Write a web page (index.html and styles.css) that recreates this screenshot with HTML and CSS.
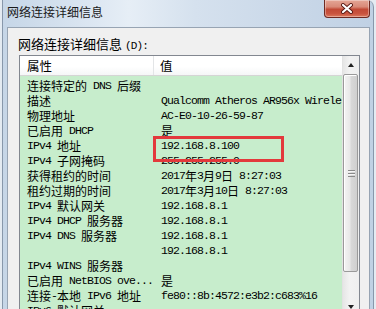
FILE: index.html
```html
<!DOCTYPE html>
<html lang="zh-CN">
<head>
<meta charset="utf-8">
<title>网络连接详细信息</title>
<link rel="stylesheet" href="styles.css">
</head>
<body>
<div class="win">
  <div class="titlebar">
    <span class="title">网络连接详细信息</span>
    <div class="close">
      <svg width="14" height="11" viewBox="0 0 14 11">
        <path d="M3 2 L11 9 M11 2 L3 9" stroke="#5a1a14" stroke-width="4" stroke-linecap="round"/>
        <path d="M3 2 L11 9 M11 2 L3 9" stroke="#ffffff" stroke-width="2.2" stroke-linecap="round"/>
      </svg>
    </div>
  </div>
  <div class="panel">
    <div class="label">网络连接详细信息 <span class="ak">(D):</span></div>
    <div class="list">
      <div class="main">
        <div class="head">
          <div class="h1">属性</div>
          <div class="h2">值</div>
        </div>
        <div class="body">
          <div class="row"><div class="n"><span class="c">连接特定的</span> DNS <span class="c">后缀</span></div><div class="v"></div></div>
          <div class="row"><div class="n"><span class="c">描述</span></div><div class="v">Qualcomm Atheros AR956x Wireless Network Adapter</div></div>
          <div class="row"><div class="n"><span class="c">物理地址</span></div><div class="v">AC-E0-10-26-59-87</div></div>
          <div class="row"><div class="n"><span class="c">已启用</span> DHCP</div><div class="v"><span class="c">是</span></div></div>
          <div class="row"><div class="n">IPv4 <span class="c">地址</span></div><div class="v hl">192.168.8.100</div></div>
          <div class="row"><div class="n">IPv4 <span class="c">子网掩码</span></div><div class="v">255.255.255.0</div></div>
          <div class="row"><div class="n"><span class="c">获得租约的时间</span></div><div class="v">2017<span class="c">年</span>3<span class="c">月</span>9<span class="c">日</span> 8:27:03</div></div>
          <div class="row"><div class="n"><span class="c">租约过期的时间</span></div><div class="v">2017<span class="c">年</span>3<span class="c">月</span>10<span class="c">日</span> 8:27:03</div></div>
          <div class="row"><div class="n">IPv4 <span class="c">默认网关</span></div><div class="v">192.168.8.1</div></div>
          <div class="row"><div class="n">IPv4 DHCP <span class="c">服务器</span></div><div class="v">192.168.8.1</div></div>
          <div class="row"><div class="n">IPv4 DNS <span class="c">服务器</span></div><div class="v">192.168.8.1</div></div>
          <div class="row"><div class="n"></div><div class="v">192.168.8.1</div></div>
          <div class="row"><div class="n">IPv4 WINS <span class="c">服务器</span></div><div class="v"></div></div>
          <div class="row"><div class="n"><span class="c">已启用</span> NetBIOS ove...</div><div class="v"><span class="c">是</span></div></div>
          <div class="row"><div class="n"><span class="c">连接</span>-<span class="c">本地</span> IPv6 <span class="c">地址</span></div><div class="v">fe80::8b:4572:e3b2:c683%16</div></div>
          <div class="row"><div class="n">IPv6 <span class="c">默认网关</span></div><div class="v"></div></div>
        </div>
      </div>
      <div class="sb">
        <div class="btn"><span class="arr up"></span></div>
        <div class="thumb"><span class="grip"></span></div>
        <div class="track"></div>
        <div class="btn"><span class="arr down"></span></div>
      </div>
    </div>
  </div>
</div>
</body>
</html>
```
FILE: styles.css
```css
* { box-sizing: border-box; }
html, body { margin: 0; padding: 0; }
body {
  width: 376px;
  height: 309px;
  overflow: hidden;
  background: #e4ebf2;
  font-family: "Noto Sans CJK SC", sans-serif;
  color: #000;
}
.win {
  margin-left: 2px;
  width: 372px;
  height: 309px;
  border-left: 1px solid #8898ab;
  border-right: 1px solid #8898ab;
  border-top-right-radius: 7px;
  background: linear-gradient(to right, #c6d6e7 0%, #d6e2ef 18%, #e6eef6 34%, #d5e1ee 52%, #cbd9e9 75%, #c0d1e4 100%);
  overflow: hidden;
}
.titlebar {
  height: 27px;
  display: flex;
  align-items: flex-start;
}
.title {
  font-size: 12px;
  line-height: 16px;
  padding: 4px 0 0 4px;
  color: #1a1a1a;
  flex: 1;
}
.close {
  width: 46px;
  height: 18px;
  margin-right: 3px;
  border: 1px solid #6e2a22;
  border-top: none;
  border-radius: 0 0 4px 4px;
  background: linear-gradient(to bottom, #e4a696 0%, #d98a78 40%, #c24a36 55%, #c9543f 80%, #dc7a5e 100%);
  display: flex;
  align-items: center;
  justify-content: center;
  box-shadow: inset 0 0 0 1px rgba(255,255,255,0.35);
}
.close svg { display: block; }
.panel {
  margin: 0 3px 0 4px;
  height: 290px;
  background: #f0f0f0;
  border: 1px solid #97a4b3;
  padding: 7px 9px 0 11px;
}
.label {
  font-size: 13px;
  line-height: 18px;
  margin-left: -1px;
  color: #000;
}
.ak {
  font-family: "Liberation Mono", monospace;
  font-size: 11px;
  letter-spacing: -0.8px;
}
.list {
  height: 261px;
  border: 1px solid #828790;
  background: #c7edcc;
  display: flex;
}
.main {
  flex: 1;
  min-width: 0;
  overflow: hidden;
}
.head {
  height: 20px;
  display: flex;
  background: linear-gradient(to bottom, #ffffff 0%, #ffffff 55%, #f5f6f7 100%);
  border-bottom: 1px solid #d5d5d5;
  font-size: 12.5px;
  line-height: 16px;
}
.h1 {
  width: 134px;
  padding: 2px 0 0 7px;
  border-right: 1px solid #e3e5e7;
}
.h2 {
  flex: 1;
  padding: 2px 0 0 6px;
}
.body {
  padding-top: 2px;
}
.row {
  display: flex;
  height: 15px;
  line-height: 15px;
  font-family: "Liberation Mono", monospace;
  font-size: 11.5px;
  letter-spacing: -0.9px;
  white-space: nowrap;
  color: #000;
}
.c {
  font-family: "Noto Sans CJK SC", sans-serif;
  font-size: 12px;
  line-height: 15px;
  vertical-align: top;
  letter-spacing: 0;
}
.n {
  width: 134px;
  flex: none;
  padding-left: 7px;
  overflow: hidden;
}
.v {
  flex: none;
  padding-left: 7px;
}
.hl { position: relative; }
.hl::after {
  content: "";
  position: absolute;
  left: -1px;
  top: -2px;
  width: 125px;
  height: 20px;
  border: 3px solid #e3393c;
}
.sb {
  width: 17px;
  flex: none;
  display: flex;
  flex-direction: column;
  background: linear-gradient(to right, #e6e6e6, #f2f2f2 40%, #efefef);
  border-left: 1px solid #e2e2e2;
}
.btn {
  height: 17px;
  flex: none;
  display: flex;
  align-items: center;
  justify-content: center;
}
.arr {
  width: 0;
  height: 0;
  border-left: 3.5px solid transparent;
  border-right: 3.5px solid transparent;
}
.arr.up { border-bottom: 4px solid #222; }
.arr.down { border-top: 4px solid #222; }
.thumb {
  height: 198px;
  flex: none;
  margin: 1px 1px 0 0;
  border: 1px solid #9a9a9a;
  border-radius: 2px;
  background: linear-gradient(to right, #f4f4f4 0%, #e8e8e8 45%, #d8d8d8 55%, #cfcfcf 100%);
  box-shadow: inset 1px 1px 0 #ffffff;
  display: flex;
  align-items: center;
  justify-content: center;
}
.grip {
  width: 7px;
  height: 7px;
  background: repeating-linear-gradient(to bottom, #8a8a8a 0, #8a8a8a 1px, #f6f6f6 1px, #f6f6f6 2px, transparent 2px, transparent 3px);
  margin-left: 1px;
}
.track {
  flex: 1;
}
```
